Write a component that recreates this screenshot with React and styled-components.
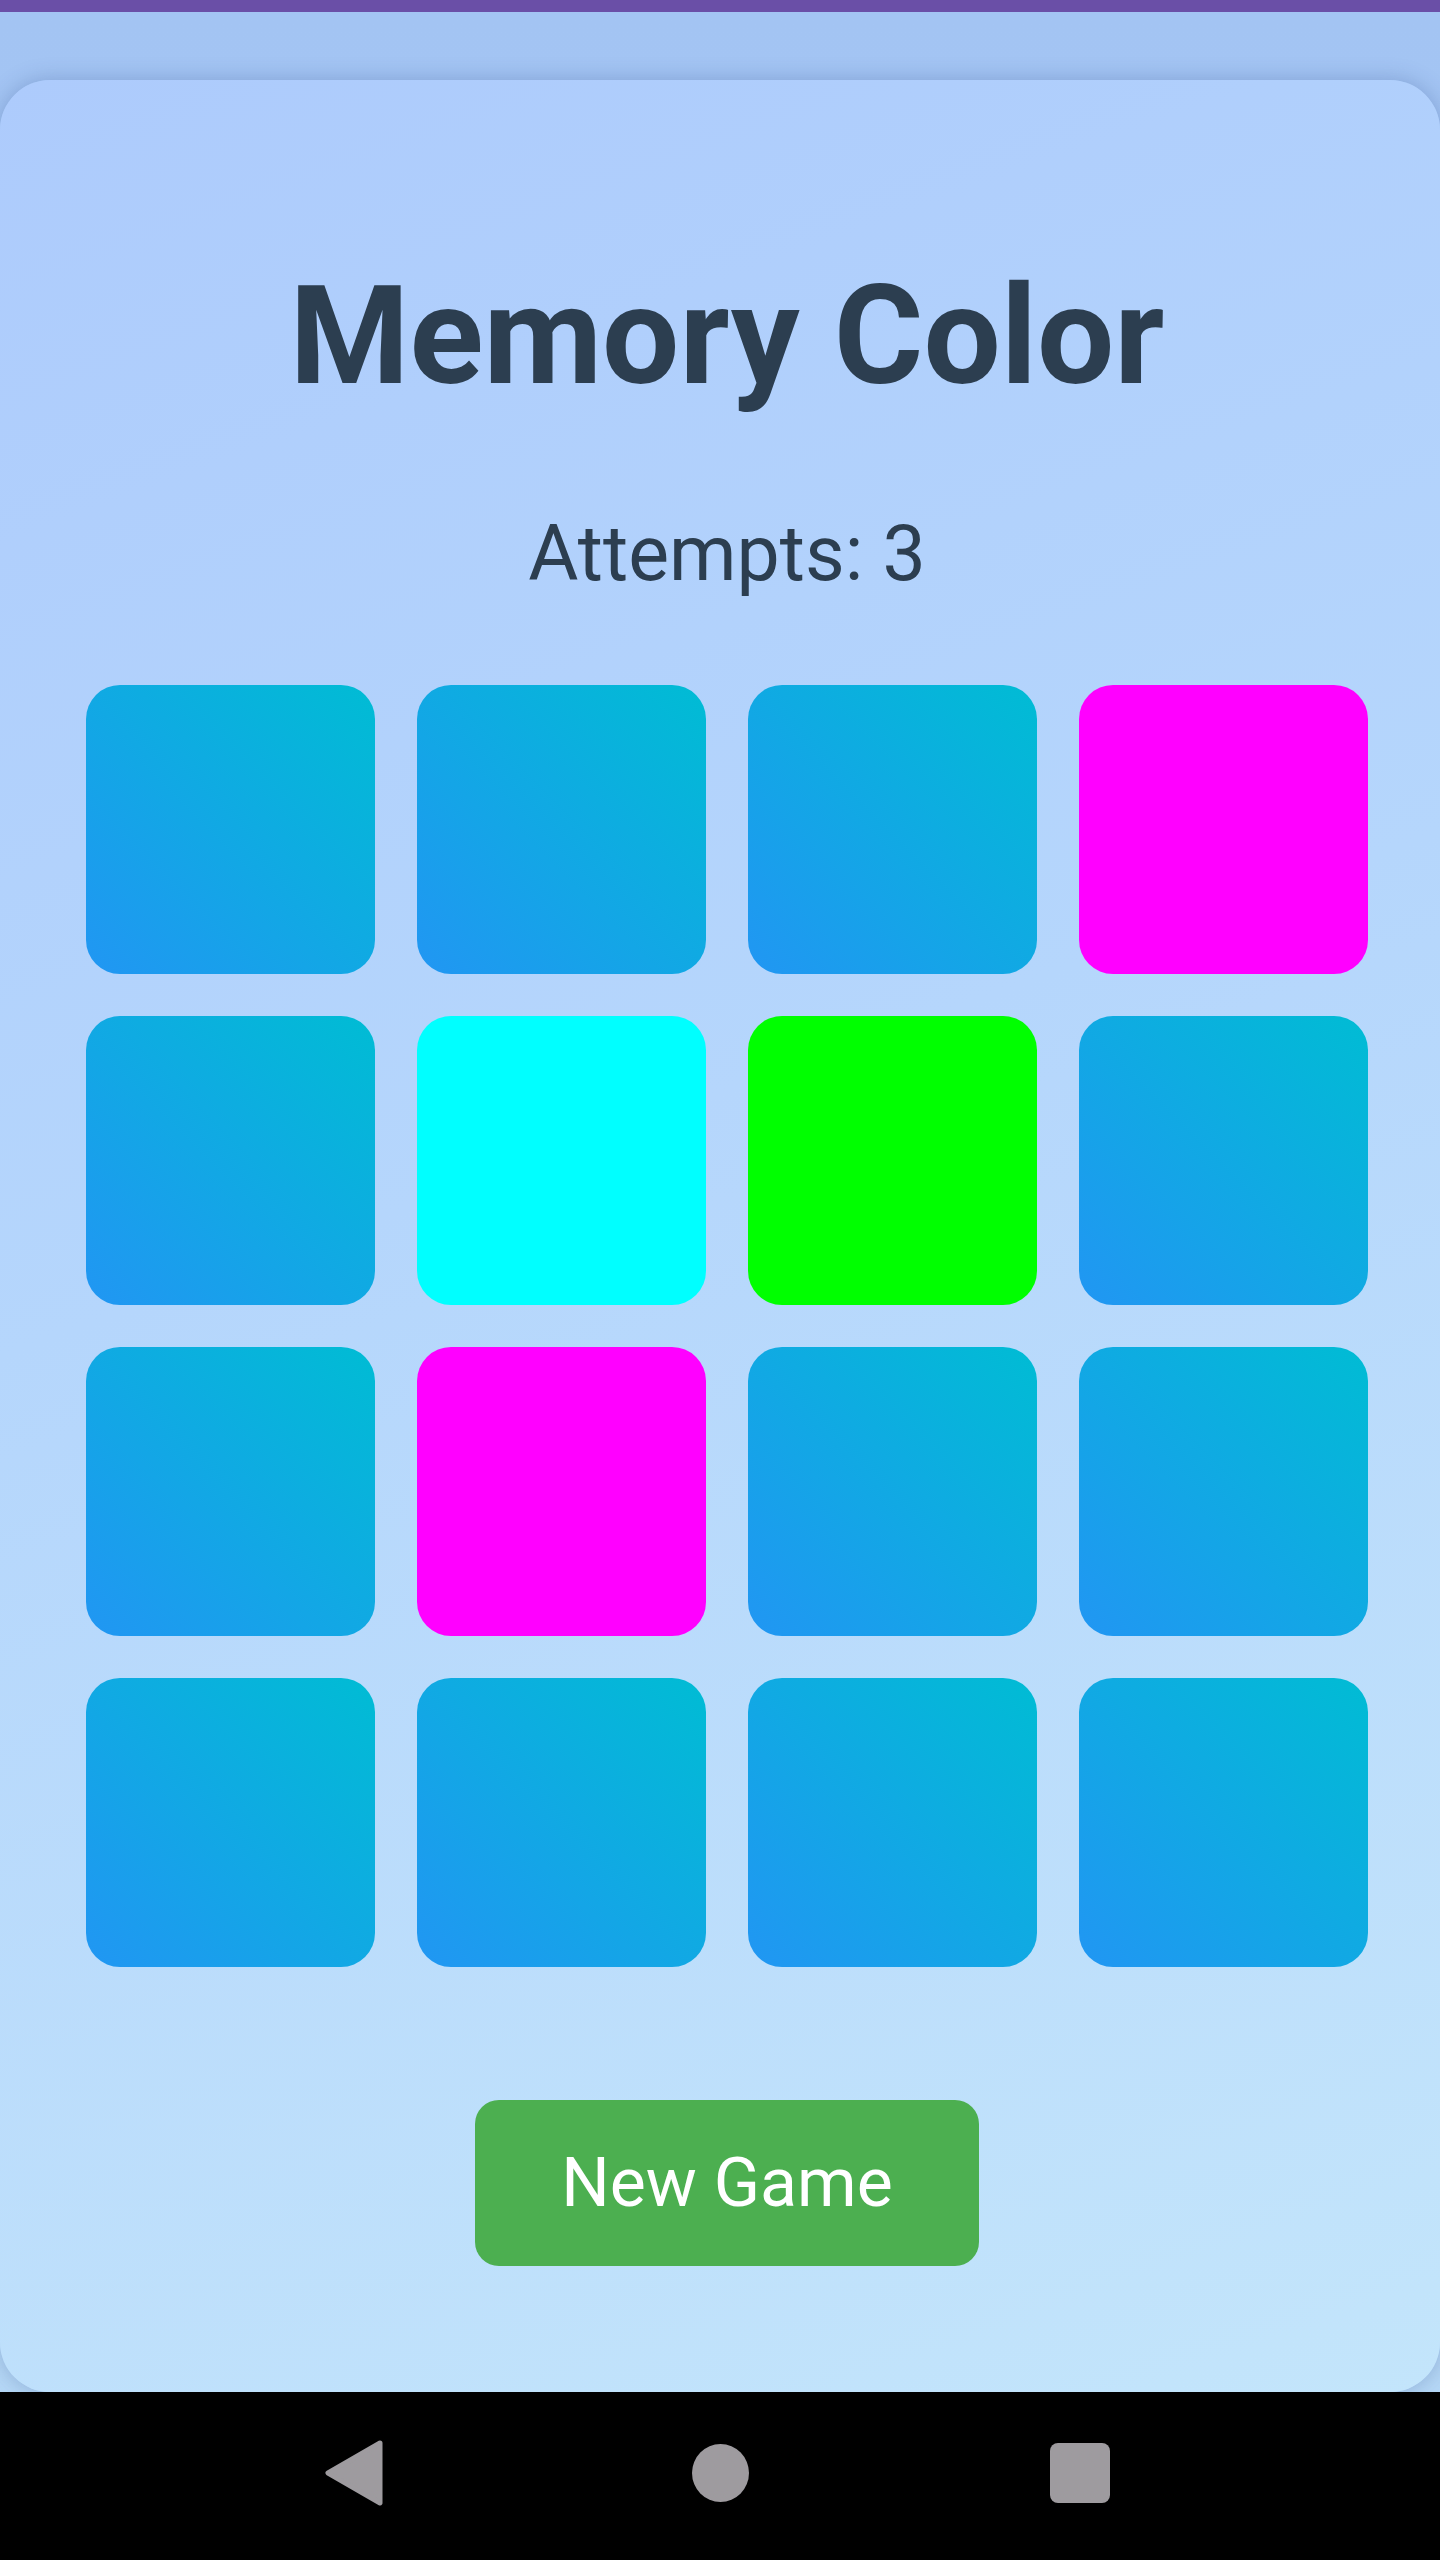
import React from "react";
import styled, { createGlobalStyle } from "styled-components";

const GlobalStyle = createGlobalStyle`
  html, body {
    margin: 0;
    padding: 0;
    background: #000;
  }
  body {
    font-family: Roboto, "Noto Sans", "Liberation Sans", sans-serif;
  }
  * { box-sizing: border-box; }
`;

const Screen = styled.div`
  width: 1440px;
  height: 2560px;
  display: flex;
  flex-direction: column;
  overflow: hidden;
`;

const StatusBar = styled.div`
  height: 12px;
  flex: none;
  background: #6a4fa7;
`;

const Main = styled.main`
  flex: 1;
  display: flex;
  flex-direction: column;
  padding-top: 68px;
  background: linear-gradient(180deg, #a3c4f3 0%, #a6c8f4 40%, #b6d8f6 100%);
`;

const Card = styled.section`
  flex: 1;
  display: flex;
  flex-direction: column;
  align-items: center;
  padding: 174px 0 0 14px;
  border-radius: 50px;
  background: linear-gradient(160deg, #adcbfc 0%, #b5d6fc 45%, #c3e5fb 100%);
  box-shadow: 0 0 22px rgba(40, 70, 130, 0.28);
`;

const Title = styled.h1`
  margin: 0;
  font-family: Roboto, "Noto Sans", sans-serif;
  font-weight: 700;
  font-size: 137px;
  line-height: 164px;
  color: #2c3e50;
`;

const Attempts = styled.p`
  margin: 91px 0 0;
  font-family: Roboto, "Noto Sans", sans-serif;
  font-weight: 400;
  font-size: 77px;
  line-height: 90px;
  color: #2c3e50;
`;

const Board = styled.div`
  margin-top: 86px;
  display: grid;
  grid-template-columns: repeat(4, 289px);
  grid-auto-rows: 289px;
  gap: 42px;
`;

const Tile = styled.button`
  border: none;
  padding: 0;
  border-radius: 34px;
  background: ${(p) =>
    p.$color ? p.$color : "linear-gradient(to top right, #2196f3 0%, #00bcd4 100%)"};
  cursor: pointer;
`;

const NewGameButton = styled.button`
  margin-top: 133px;
  border: none;
  border-radius: 24px;
  background: #4caf50;
  color: #ffffff;
  font-family: Roboto, "Noto Sans", sans-serif;
  font-size: 68px;
  line-height: 82px;
  padding: 42px 86px;
  cursor: pointer;
`;

const NavBar = styled.nav`
  height: 168px;
  flex: none;
  background: #000;
  display: flex;
  justify-content: center;
  align-items: center;
  gap: 240px;
  padding-bottom: 6px;
`;

const NavButton = styled.div`
  width: 120px;
  height: 80px;
  display: flex;
  align-items: center;
  justify-content: center;
`;

const BackButton = styled(NavButton)`
  padding-right: 12px;
`;

const HomeDot = styled.div`
  width: 57px;
  height: 58px;
  border-radius: 50%;
  background: #9e9b9f;
`;

const RecentSquare = styled.div`
  width: 60px;
  height: 60px;
  border-radius: 8px;
  background: #9e9b9f;
`;

const tiles = [
  null, null, null, "#ff00ff",
  null, "#00ffff", "#00ff00", null,
  null, "#ff00ff", null, null,
  null, null, null, null,
];

export default function App() {
  return (
    <>
      <GlobalStyle />
      <Screen>
        <StatusBar />
        <Main>
          <Card>
            <Title>Memory Color</Title>
            <Attempts>Attempts: 3</Attempts>
            <Board>
              {tiles.map((c, i) => (
                <Tile key={i} $color={c} aria-label={`tile ${i + 1}`} />
              ))}
            </Board>
            <NewGameButton>New Game</NewGameButton>
          </Card>
        </Main>
        <NavBar>
          <BackButton>
            <svg width="62" height="70" viewBox="-3 -3 62 70">
              <path
                d="M54 2 L2 32 L54 62 Z"
                fill="#9e9b9f"
                stroke="#9e9b9f"
                strokeWidth="5"
                strokeLinejoin="round"
              />
            </svg>
          </BackButton>
          <NavButton>
            <HomeDot />
          </NavButton>
          <NavButton>
            <RecentSquare />
          </NavButton>
        </NavBar>
      </Screen>
    </>
  );
}
